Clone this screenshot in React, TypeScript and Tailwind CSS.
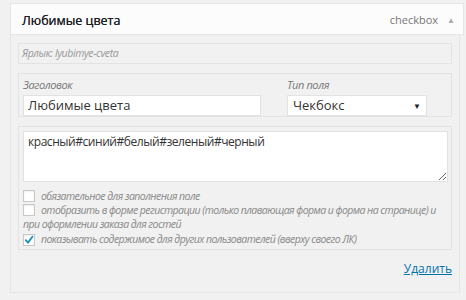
import React from "react";

const font = { fontFamily: '"Open Sans", "Noto Sans", sans-serif' };

function Check({ checked }: { checked?: boolean }) {
  return (
    <span className="inline-flex items-center justify-center w-[12px] h-[12px] mr-[6px] border border-[#c8c8c8] bg-white align-[-2px] shadow-[inset_0_1px_2px_rgba(0,0,0,0.08)]">
      {checked && (
        <svg width="10" height="10" viewBox="0 0 10 10">
          <path d="M1.8 5.2 L4 7.6 L8.4 1.8" fill="none" stroke="#1e8cbe" strokeWidth="1.8" strokeLinecap="round" strokeLinejoin="round" />
        </svg>
      )}
    </span>
  );
}

export default function App() {
  return (
    <div className="w-[466px] h-[300px] bg-[#f1f1f1] pt-[3px] pl-[10px] overflow-hidden" style={font}>
      <div className="w-[454px] h-[32px] bg-[#fcfcfc] border border-[#e5e5e5] flex items-center justify-between pl-[11px] pr-[8px] pt-[5px]">
        <span className="text-[12.5px] text-[#1d2125] font-normal [text-shadow:0_0_0.4px_#1d2125]">Любимые цвета</span>
        <span className="flex items-center text-[11px] text-[#777] -mt-[3px]">
          checkbox
          <span className="ml-[9px] text-[8px] text-[#aaa]">▲</span>
        </span>
      </div>
      <div className="w-[450px] h-[258px] border-x border-b border-[#e5e5e5] bg-[#f1f1f1] pt-[8px] px-[7px] flex flex-col">
        <div className="h-[21px] border border-[#e3e3e3] flex items-center pl-[3px] text-[10.5px] tracking-[-0.4px] italic text-[#999]">
          Ярлык: lyubimye-cveta
        </div>
        <div className="mt-[9px] h-[44px] border border-[#e3e3e3] px-[4px] pt-[3px] flex gap-[26px]">
          <div className="flex flex-col">
            <span className="text-[11px] tracking-[-0.4px] italic text-[#777] leading-[16px] h-[18px]">Заголовок</span>
            <div className="w-[238px] h-[21px] bg-white border border-[#e2e2e2] flex items-center pl-[4px] text-[13px] text-[#333]">
              Любимые цвета
            </div>
          </div>
          <div className="flex flex-col">
            <span className="text-[11px] tracking-[-0.4px] italic text-[#777] leading-[16px] h-[18px]">Тип поля</span>
            <div className="w-[140px] h-[21px] bg-white border border-[#e2e2e2] flex items-center justify-between pl-[5px] pr-[5px] text-[13px] text-[#333]">
              Чекбокс
              <span className="text-[8px] text-[#222]">▼</span>
            </div>
          </div>
        </div>
        <div className="mt-[9px] h-[124px] border border-[#e3e3e3] px-[4px] pt-[4px]">
          <textarea
            readOnly
            defaultValue="красный#синий#белый#зеленый#черный"
            className="block w-[425px] h-[51px] bg-white border border-[#e2e2e2] px-[4px] pt-[1px] text-[12px] tracking-[-0.45px] text-[#333] outline-none"
            style={font}
          />
          <div className="mt-[7px] text-[10.5px] tracking-[-0.55px] italic text-[#888] leading-[14px] pr-[4px]">
            <div><Check />обязательное для заполнения поле</div>
            <div><Check />отобразить в форме регистрации (только плавающая форма и форма на странице) и при оформлении заказа для гостей</div>
            <div className="mt-[1px]"><Check checked />показывать содержимое для других пользователей (вверху своего ЛК)</div>
          </div>
        </div>
        <div className="flex justify-end mt-[10px]">
          <a className="text-[12px] text-[#0073aa] underline">Удалить</a>
        </div>
      </div>
    </div>
  );
}
